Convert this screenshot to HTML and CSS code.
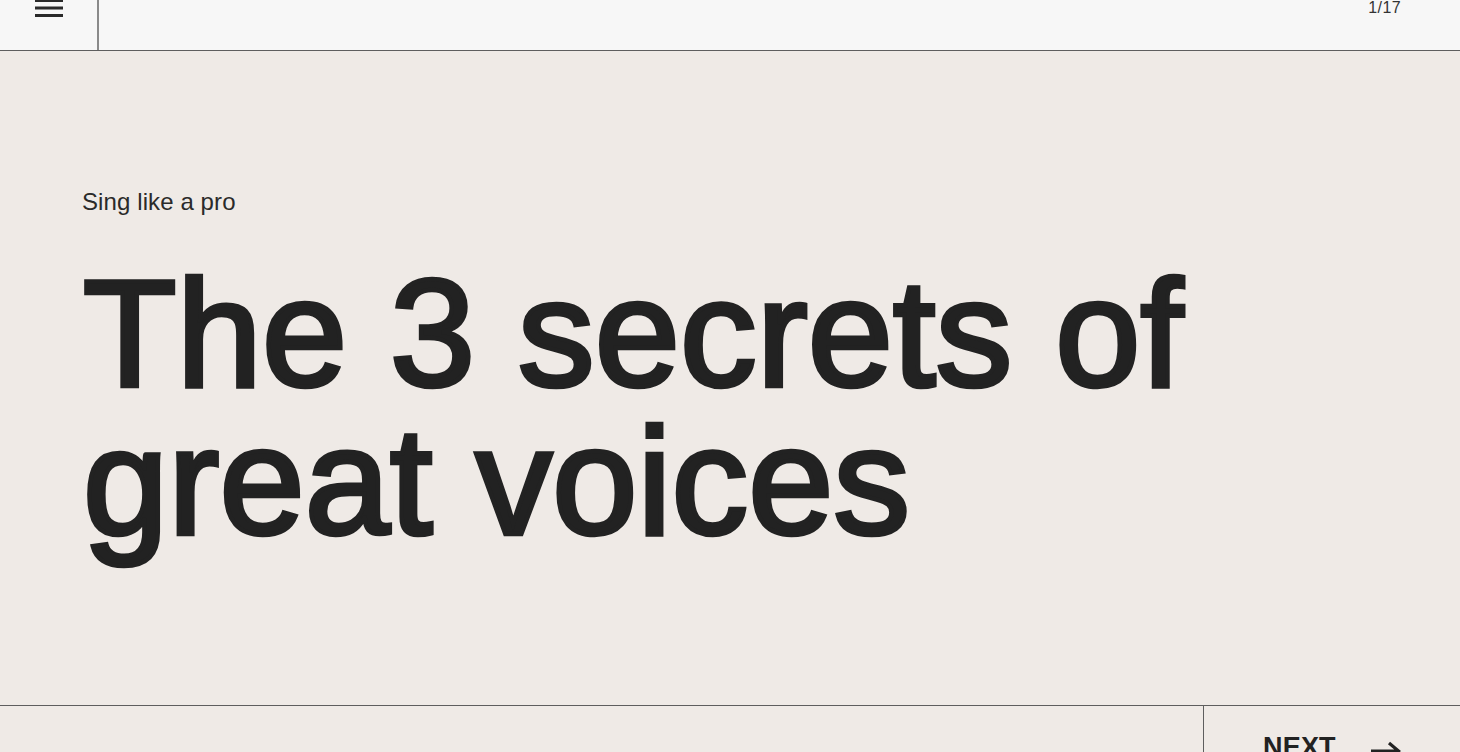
FILE: index.html
```html
<!DOCTYPE html>
<html lang="en">
<head>
<meta charset="utf-8">
<title>The 3 secrets of great voices</title>
<link rel="stylesheet" href="styles.css">
</head>
<body>
<header class="topbar">
  <div class="menu-cell">
    <svg class="menu-icon" width="28" height="19" viewBox="0 0 28 19" aria-hidden="true">
      <rect x="0" y="0" width="28" height="3" fill="#2a2a2a"/>
      <rect x="0" y="7.5" width="28" height="3" fill="#2a2a2a"/>
      <rect x="0" y="15" width="28" height="3" fill="#2a2a2a"/>
    </svg>
  </div>
  <div class="topbar-fill"></div>
  <div class="counter">1/17</div>
</header>
<main class="slide">
  <p class="kicker">Sing like a pro</p>
  <h1 class="title">The 3 secrets of<br>great voices</h1>
</main>
<footer class="bottombar">
  <div class="bottom-fill"></div>
  <a class="next" href="#">
    <span class="next-label">NEXT</span>
    <svg class="next-arrow" width="31" height="20" viewBox="0 0 31 20" aria-hidden="true">
      <path d="M1 10 H28 M19 2 L28.5 10 L19 18" fill="none" stroke="#222" stroke-width="3.2"/>
    </svg>
  </a>
</footer>
</body>
</html>
```

FILE: styles.css
```css
html, body {
  margin: 0;
  padding: 0;
}
body {
  font-family: "Liberation Sans", Arial, sans-serif;
  color: #222;
  background: #efeae6;
  overflow: hidden;
}
.topbar {
  box-sizing: border-box;
  height: 51px;
  display: flex;
  align-items: stretch;
  background: #f7f7f7;
  border-bottom: 1px solid #5e5e5e;
}
.menu-cell {
  width: 97px;
  border-right: 2px solid #8a8a8a;
  display: flex;
  justify-content: center;
  align-items: flex-start;
}
.menu-icon {
  display: block;
  margin-top: -1px;
}
.topbar-fill {
  flex: 1;
}
.counter {
  font-size: 16px;
  line-height: 18px;
  margin-top: -1px;
  padding-right: 59px;
  color: #333;
  letter-spacing: 0.4px;
}
.slide {
  box-sizing: border-box;
  height: 654px;
  padding: 137px 0 0 83px;
}
.kicker {
  margin: 0 0 0 -1px;
  font-size: 24px;
  line-height: 27px;
  letter-spacing: 0.1px;
  color: #2a2a2a;
}
.title {
  margin: 44px 0 0 0;
  font-size: 153px;
  line-height: 148px;
  font-weight: 400;
  letter-spacing: 0.2px;
  color: #222;
  -webkit-text-stroke: 4.5px #222;
}
.bottombar {
  display: flex;
  height: 90px;
  border-top: 1px solid #5e5e5e;
}
.bottom-fill {
  width: 1203px;
  border-right: 1px solid #5e5e5e;
}
.next {
  flex: 1;
  display: flex;
  justify-content: space-between;
  align-items: flex-start;
  padding: 26px 59px 0 59px;
  color: #222;
  text-decoration: none;
}
.next-label {
  font-size: 27px;
  font-weight: 700;
  line-height: 31px;
  letter-spacing: 0.2px;
}
.next-arrow {
  display: block;
  margin-top: 9px;
}
```
